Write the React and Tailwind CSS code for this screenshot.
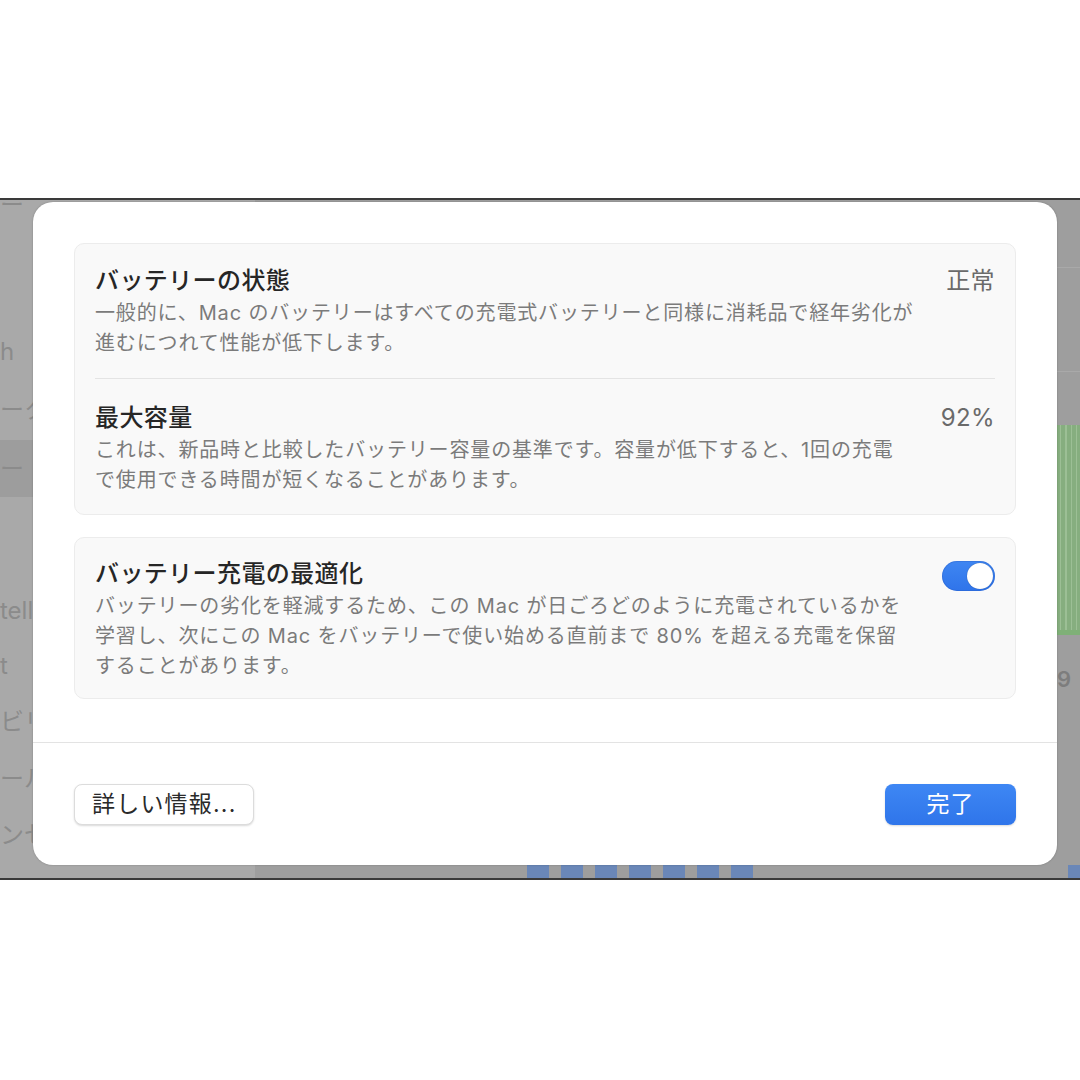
const sidebar_rows = [
	{ label: 'ー', h: 'h-[30px]' },
	{ label: '', h: 'h-[105px]' },
	{ label: 'h', h: 'h-[54px]' },
	{ label: 'ーク', h: 'h-[61px]' },
	{ label: 'ー', h: 'h-[57px]', selected: true },
	{ label: '', h: 'h-[86px]' },
	{ label: 'tell', h: 'h-[55px]' },
	{ label: 't', h: 'h-[55px]' },
	{ label: 'ビリ', h: 'h-[57px]' },
	{ label: 'ール', h: 'h-[57px]' },
	{ label: 'ンセ', h: 'h-[56px]' },
]

function Toggle() {
	return (
		<div className="w-[53px] h-[30px] rounded-full bg-gradient-to-b from-[#3f86f2] to-[#2f74ea] p-[2px] flex justify-end shrink-0 shadow-[inset_0_0_0_1px_rgba(30,80,180,0.25)]">
			<div className="w-[26px] h-[26px] rounded-full bg-white shadow-[0_0_1px_rgba(0,0,0,0.4)]" />
		</div>
	)
}

function Row({ title, value, lines, right }) {
	return (
		<div className="flex justify-between items-start gap-6">
			<div className="min-w-0">
				<div className="text-[24px] leading-[30px] font-medium tracking-[0.4px] text-[#262626]">{title}</div>
				<div className="mt-[2px] text-[20px] leading-[30px] tracking-[0.85px] text-[#7b7b7b]">
					{lines.map((line, i) => (
						<div key={i} className="whitespace-nowrap">{line}</div>
					))}
				</div>
			</div>
			{right ?? (
				<div className="text-[24px] leading-[30px] tracking-[0.4px] text-[#6a6a6a] whitespace-nowrap">{value}</div>
			)}
		</div>
	)
}

export default function App() {
	return (
		<div className="w-[1080px] h-[1080px] bg-white overflow-hidden font-['Inter','Noto_Sans_CJK_JP',sans-serif]">
			<div className="h-[198px]" />

			{/* dimmed settings window */}
			<div className="relative h-[682px] border-y-2 border-[#3a3a3a] flex overflow-hidden">
				<div className="w-[255px] bg-[#a9a9a9] flex flex-col -mt-[10px]">
					{sidebar_rows.map((row, i) => (
						<div
							key={i}
							className={`${row.h} shrink-0 flex items-center text-[24px] leading-none text-[#8b8b8b] whitespace-nowrap ${row.selected ? 'bg-[#9d9d9d]' : ''}`}
						>
							{row.label}
						</div>
					))}
				</div>
				<div className="flex-1 bg-[#9e9e9e] flex flex-col">
					<div className="flex-1 flex justify-end">
						<div className="w-[23px] flex flex-col">
							<div className="h-[68px] border-b border-[#a9a9a9]" />
							<div className="h-[104px] border-b border-[#a9a9a9]" />
							<div className="h-[53px]" />
							<div className="h-[205px] bg-[#86ae7f] flex gap-[4px] px-[3px]">
								<div className="w-[2px] bg-[#9cbf95]" />
								<div className="w-[2px] bg-[#9cbf95]" />
								<div className="w-[2px] bg-[#9cbf95]" />
								<div className="w-[2px] bg-[#9cbf95]" />
							</div>
							<div className="h-[5px] bg-[#7fb077]" />
							<div className="mt-[33px] text-[22px] font-semibold text-[#7d7d7d] leading-none">9</div>
						</div>
					</div>
					<div className="h-[13px] flex items-stretch">
						<div className="ml-[272px] flex gap-[12px]">
							{[0, 1, 2, 3, 4, 5, 6].map(i => (
								<div key={i} className="w-[22px] bg-[#6a87b8]" />
							))}
						</div>
						<div className="flex-1" />
						<div className="w-[12px] bg-[#6a87b8]" />
					</div>
				</div>

				{/* sheet */}
				<div className="absolute left-[33px] top-[2px] w-[1024px] h-[663px] bg-white rounded-[20px] shadow-[0_0_2px_rgba(0,0,0,0.25)] flex flex-col">
					<div className="px-[41px] pt-[41px] flex flex-col gap-[22px]">
						<div className="bg-[#f9f9f9] border border-[#ececec] rounded-[10px] pl-[20px] pr-[20px] pt-[22px] pb-[19px]">
							<Row
								title="バッテリーの状態"
								value="正常"
								lines={[
									'一般的に、Mac のバッテリーはすべての充電式バッテリーと同様に消耗品で経年劣化が',
									'進むにつれて性能が低下します。',
								]}
							/>
							<div className="h-px bg-[#e4e4e4] mt-[20px] mb-[24px]" />
							<Row
								title="最大容量"
								value="92%"
								lines={[
									'これは、新品時と比較したバッテリー容量の基準です。容量が低下すると、1回の充電',
									'で使用できる時間が短くなることがあります。',
								]}
							/>
						</div>
						<div className="bg-[#f9f9f9] border border-[#ececec] rounded-[10px] pl-[20px] pr-[20px] pt-[21px] pb-[17px]">
							<Row
								title="バッテリー充電の最適化"
								lines={[
									'バッテリーの劣化を軽減するため、この Mac が日ごろどのように充電されているかを',
									'学習し、次にこの Mac をバッテリーで使い始める直前まで 80% を超える充電を保留',
									'することがあります。',
								]}
								right={<div className="mt-[2px]"><Toggle /></div>}
							/>
						</div>
					</div>
					<div className="h-px bg-[#e3e3e3] mt-[43px]" />
					<div className="flex-1 px-[41px] flex items-center justify-between">
						<button className="h-[41px] px-[17px] rounded-[8px] bg-white border border-[#dcdcdc] shadow-[0_1px_2px_rgba(0,0,0,0.15)] text-[23px] tracking-[1.2px] text-[#2a2a2a]">
							詳しい情報...
						</button>
						<button className="h-[41px] w-[131px] rounded-[8px] bg-gradient-to-b from-[#3e87f4] to-[#2f75ea] text-[23px] tracking-[1px] text-white shadow-[0_1px_2px_rgba(0,0,0,0.15)]">
							完了
						</button>
					</div>
				</div>
			</div>
		</div>
	)
}
